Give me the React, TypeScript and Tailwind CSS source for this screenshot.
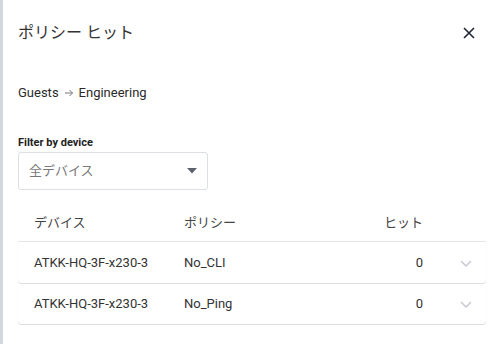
const rows = [
  { device: 'ATKK-HQ-3F-x230-3', policy: 'No_CLI', hits: 0 },
  { device: 'ATKK-HQ-3F-x230-3', policy: 'No_Ping', hits: 0 },
];

function Chevron() {
  return (
    <svg width="12" height="8" viewBox="0 0 12 8" fill="none">
      <path d="M1.5 1.5 6 6l4.5-4.5" stroke="#c7cad1" strokeWidth="1.6" strokeLinecap="round" strokeLinejoin="round" />
    </svg>
  );
}

export default function App() {
  return (
    <div
      className="flex h-[344px] w-[502px] overflow-hidden bg-white text-[#333]"
      style={{ fontFamily: 'Roboto, "Noto Sans CJK JP", sans-serif' }}
    >
      <div className="w-[3px] shrink-0 bg-[#d3d7de]" />
      <div className="flex-1 pl-[15px] pr-[16px]">
        <div className="flex h-[66px] items-center justify-between">
          <h1 className="text-[16px] font-normal text-[#333]">ポリシー ヒット</h1>
          <button className="mr-[5px] flex h-[24px] w-[24px] items-center justify-center">
            <svg width="12" height="12" viewBox="0 0 12 12" fill="none">
              <path d="M1 1l10 10M11 1 1 11" stroke="#1e2535" strokeWidth="1.6" />
            </svg>
          </button>
        </div>

        <div className="mt-[17px] flex h-[20px] items-center gap-[5px] text-[13px] text-[#2a2a2a]">
          <span>Guests</span>
          <svg width="10" height="10" viewBox="0 0 10 10" fill="none">
            <path d="M1 5h7.5M5.5 2l3 3-3 3" stroke="#777" strokeWidth="1" />
          </svg>
          <span>Engineering</span>
        </div>

        <div className="mt-[33px] text-[11px] font-bold leading-[14px] text-[#222]">Filter by device</div>
        <div className="mt-[2px] flex h-[38px] w-[190px] items-center justify-between rounded-[3px] border border-[#dcdfe4] pl-[10px] pr-[10px]">
          <span className="text-[13px] text-[#777]">全デバイス</span>
          <svg width="10" height="6" viewBox="0 0 10 6">
            <path d="M0 0h10L5 5.5z" fill="#5c6370" />
          </svg>
        </div>

        <div className="mt-[15px] flex h-[36px] items-center pl-[16px] text-[13px] text-[#444]">
          <div className="w-[150px]">デバイス</div>
          <div className="flex-1">ポリシー</div>
          <div className="mr-[63px] w-[60px] text-right">ヒット</div>
        </div>

        <div className="border-t border-[#e3e5e9]">
          {rows.map((r, i) => (
            <div
              key={i}
              className="flex h-[41px] items-center rounded-b-[4px] pl-[16px] text-[13px] text-[#333] shadow-[0_1px_1px_rgba(0,0,0,0.14)]"
            >
              <div className="w-[150px]">{r.device}</div>
              <div className="flex-1">{r.policy}</div>
              <div className="mr-[19px] w-[60px] text-right">{r.hits}</div>
              <div className="flex w-[44px] justify-center pl-[3px] pt-[3px]">
                <Chevron />
              </div>
            </div>
          ))}
        </div>
      </div>
    </div>
  );
}
